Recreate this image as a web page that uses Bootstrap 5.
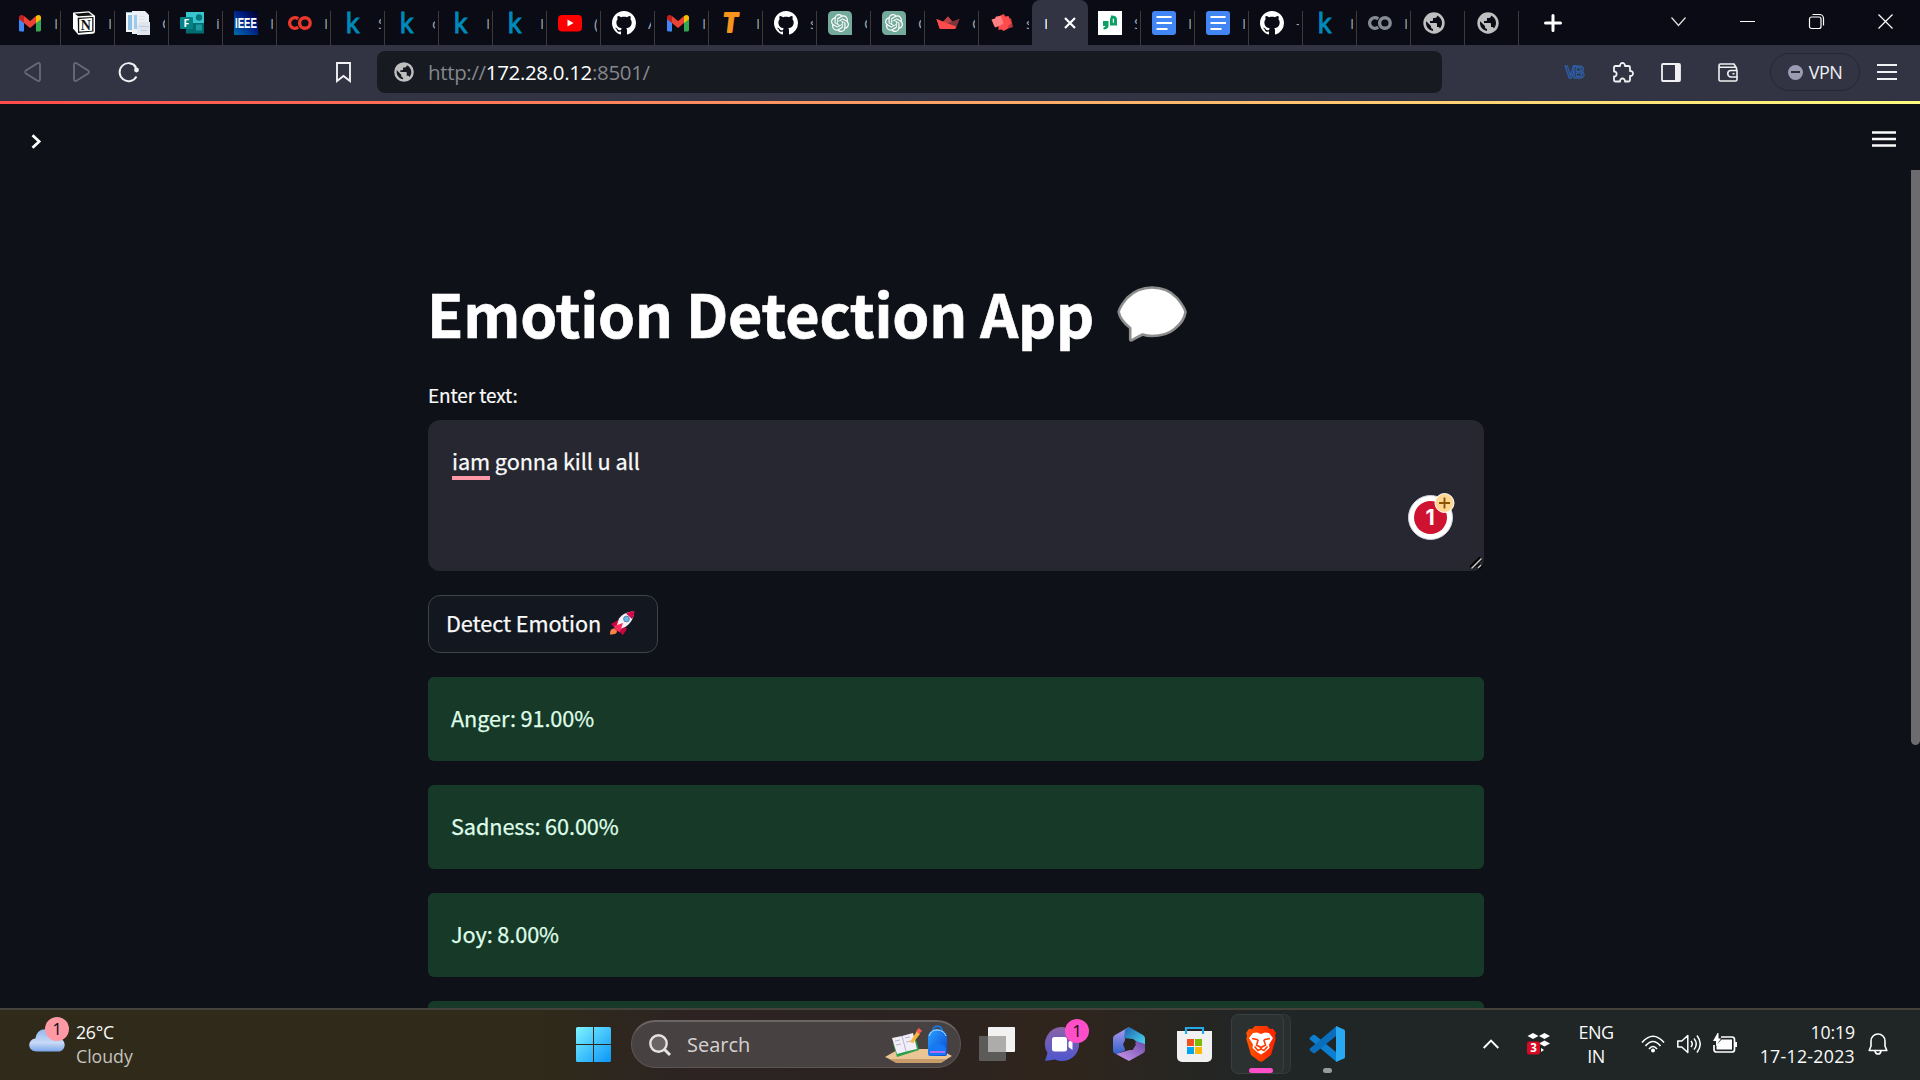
<!DOCTYPE html>
<html lang="en" data-bs-theme="dark">
<head>
<meta charset="utf-8">
<title>Emotion Detection App</title>
<link href="https://cdn.jsdelivr.net/npm/bootstrap@5.3.0/dist/css/bootstrap.min.css" rel="stylesheet">
<style>
  body { width:1920px; height:1080px; overflow:hidden; background:#0e1117; color:#fafafa; font-family:"Noto Sans CJK SC","Noto Sans",sans-serif; }
  svg { display:block; flex:none; overflow:visible; }
  .defs-only { position:absolute; width:0; height:0; }
  .ui-font { font-family:"Open Sans","Noto Sans",sans-serif; }
  /* browser tabs */
  .tab-strip { height:45px; background:#0a0b14; padding-left:7px; }
  .fav-tab { width:54px; height:45px; padding-left:11px; flex:none; position:relative; }
  .fav-tab::after { content:""; position:absolute; right:0; top:11px; bottom:0; width:1px; background:#3b3b3b; }
  .fav-tab svg { width:24px; height:24px; }
  .fav-tab .clip { width:3px; margin-left:12px; overflow:hidden; white-space:nowrap; font-size:15px; line-height:24px; color:#a2a3a8; }
  .fav-tab.no-line::after { display:none; }
  .fav-tab.current { width:56px; margin:0 -1px; background:#323443; border-radius:8px 8px 0 0; padding-left:12px; }
  .fav-tab.current .clip { margin-left:0; color:#fff; }
  .fav-tab.current svg { width:12px; height:12px; margin-left:17px; }
  .fav-tab.current::after { display:none; }
  .k-fav { width:24px; margin-right:0; }
  .win-btns { gap:54px; padding:0 27px 2px 0; }
  /* toolbar */
  .tool-bar { height:56px; background:#323443; padding:0 0 2px 24px; }
  .addr { width:1065px; height:42px; border-radius:8px; background:#171a21; margin-left:26px; padding-left:17px; font-size:20.5px; letter-spacing:-.34px; color:#85878c; }
  .addr b { font-weight:400; color:#fff; }
  .vpn { width:90px; height:38px; border:1px solid #252734; border-radius:19px; font-size:18px; color:#f0f0f3; letter-spacing:-.5px; }
  .vpn-dot { width:15px; height:15px; border-radius:50%; background:#9b9cb3; }
  .vpn-dot i { width:9px; height:2px; background:#2b2d3a; }
  .rainbow { height:3px; background:linear-gradient(90deg,#ff4b4b,#fffd80); }
  /* app */
  .app-view { height:904px; overflow:hidden; position:relative; }
  .app-head { height:66px; padding:0 24px 0 31px; }
  .scroll-thumb { position:absolute; right:0; top:66px; width:9px; height:575px; background:#6b6b70; border-radius:0 0 5px 5px; }
  .app-col { width:1056px; margin-left:428px; padding-top:102px; }
  .app-title { font-size:59.3px; font-weight:700; line-height:80px; height:80px; margin:0; letter-spacing:-.22px; -webkit-text-stroke:.7px #fafafa; }
  .app-title span { margin-left:-1px; }
  .field-label { font-size:19px; line-height:28px; height:28px; margin-top:29px; letter-spacing:-.1px; -webkit-text-stroke:.2px; }
  .text-box { height:151px; margin-top:11px; background:#262730; border-radius:12px; padding:25px 24px; font-size:21.7px; line-height:32px; letter-spacing:-.08px; position:relative; -webkit-text-stroke:.25px; }
  .typo { border-bottom:4px solid #ff99a8; display:inline-block; height:35px; }
  .gram { position:absolute; left:979px; top:73px; -webkit-text-stroke:0; }
  .grip { position:absolute; right:2px; bottom:2px; }
  .btn-detect { height:58px; margin-top:24px; border:1px solid #41434c; border-radius:12px; background:#131720; color:#fafafa; font-size:21.7px; letter-spacing:-.1px; padding:0 22px 2px 17px; width:230px; -webkit-text-stroke:.25px; }
  .result { height:84px; margin:24px 0 0; border:0; border-radius:6px; background:#173928; color:#dffde9; padding:0 23px 2px; font-size:21.7px; letter-spacing:-.1px; -webkit-text-stroke:.25px; }
  /* taskbar */
  .task-bar { height:72px; border-top:2px solid #45423b; padding-bottom:2px; background:linear-gradient(90deg,#302a1a 0,#302a1a 28%,#2c2322 36%,#2b2322 46%,#30251c 55%,#202626 66%,#202626 100%); position:relative; }
  .task-bar > * { flex:none; }
  .w-text { font-size:17.7px; line-height:24px; }
  .pip { position:absolute; width:24px; height:24px; border-radius:50%; color:#111; font-size:17px; line-height:24px; text-align:center; }
  .search-pill { width:330px; height:48px; border-radius:24px; background:#484141; border:1px solid #5c5555; border-top:2px solid #6c6565; padding-left:17px; font-size:20px; color:#d5d2d1; }
  .app-tile { width:53px; height:60px; border-radius:7px; background:#2b3031; border:1px solid #3a3f40; box-shadow:7px 0 0 -1px #292e2f,7px 0 0 0 #33393a; position:relative; }
  .run-mark { position:absolute; bottom:0; left:17px; width:24px; height:5px; border-radius:3px; background:#ff4fc8; }
  .run-dot { position:absolute; bottom:-11px; left:14px; width:9px; height:5px; border-radius:3px; background:#979b9c; }
</style>
<script src="https://cdn.jsdelivr.net/npm/bootstrap@5.3.0/dist/js/bootstrap.bundle.min.js"></script>
</head>
<body>
<svg class="defs-only">
  <defs>
    <linearGradient id="ieeeG" x1="0" y1="1" x2="1" y2="0"><stop offset="0" stop-color="#006db0"/><stop offset=".6" stop-color="#001a80"/><stop offset="1" stop-color="#000020"/></linearGradient>
    <linearGradient id="winG" x1="0" y1="0" x2="1" y2="1"><stop offset="0" stop-color="#7df3ff"/><stop offset="1" stop-color="#0a95f8"/></linearGradient>
    <linearGradient id="cloudG" x1="0" y1="0" x2="0" y2="1"><stop offset="0" stop-color="#8fb8f2"/><stop offset=".6" stop-color="#c9daf6"/><stop offset="1" stop-color="#7ba6ea"/></linearGradient>
    <linearGradient id="chatG" x1="0" y1="0" x2="0" y2="1"><stop offset="0" stop-color="#8a63a8"/><stop offset="1" stop-color="#4f57cf"/></linearGradient>
    <linearGradient id="bagG" x1="0" y1="0" x2="1" y2="1"><stop offset="0" stop-color="#2aa2ff"/><stop offset="1" stop-color="#0a49d8"/></linearGradient>
    <linearGradient id="braveG"><stop offset="0" stop-color="#ff5500"/><stop offset="1" stop-color="#ff2000"/></linearGradient>
    <linearGradient id="m1" x1="0" y1="0" x2="0" y2="1"><stop offset="0" stop-color="#b79af0"/><stop offset="1" stop-color="#2f62c9"/></linearGradient>
    <linearGradient id="m2" x1="0" y1="0" x2="1" y2="1"><stop offset="0" stop-color="#1b5fae"/><stop offset="1" stop-color="#4fe0f5"/></linearGradient>
    <linearGradient id="m3" x1="0" y1="1" x2="1" y2="0"><stop offset="0" stop-color="#cf9af0"/><stop offset="1" stop-color="#6a4ba8"/></linearGradient>
  </defs>
  <symbol id="gmail" viewBox="0 0 24 24"><path fill="#4285f4" d="M1 6v13.400A1.500 1.500 0 0 0 2.500 20.500H6V10z"/><path fill="#34a853" d="M18 10v10.500h3.500a1.500 1.500 0 0 0 1.500-1.500V6z"/><path fill="#ea4335" d="M6 5l6 5 6-5v7l-6 5-6-5z"/><path fill="#c5221f" d="M1 6.500C1 4 3.500 3 6 5v7L1 8.200z"/><path fill="#fbbc04" d="M23 6.500C23 4 20.500 3 18 5v7l5-3.800z"/></symbol>
  <symbol id="docs3" viewBox="0 0 24 24"><path fill="#f4f6f8" d="M0 1h8v20H0z"/><path fill="#8fc0e6" d="M2 4h4v15H2zM0 1h9v1H0z"/><path fill="#eceff3" d="M6 0h13l4 4v19H6z"/><path fill="#9ccbee" d="M8 4h3v14H8z"/><path fill="#dfe3ea" d="M13 5h6v1h-6zM13 8h6v1h-6z"/><path fill="#dfe5ee" d="M14 11h10v13H11V15z"/><path fill="#c3cbd8" d="M13 15h10v1H13zm2 4h6v1h-6z"/></symbol>
  <symbol id="colab" viewBox="0 0 24 24"><g fill="none" stroke="currentColor" stroke-width="3.400"><path d="M10.200 7.800a5.300 5.300 0 1 0 0 8.400"/><circle cx="16.900" cy="12" r="5.300"/></g></symbol>
  <symbol id="yt" viewBox="0 0 24 24"><rect y="4" width="24" height="16.500" rx="4" fill="#f00"/><path fill="#fff" d="M9.500 8.500v7l6-3.500z"/></symbol>
  <symbol id="gh" viewBox="0 0 16 16"><path fill="#fff" d="M8 0C3.580 0 0 3.580 0 8c0 3.540 2.290 6.530 5.470 7.590.4.070.55-.17.55-.38 0-.19-.01-.82-.01-1.490-2.010.37-2.530-.49-2.690-.94-.09-.23-.48-.94-.82-1.130-.28-.15-.68-.52-.01-.53.63-.01 1.080.58 1.230.82.72 1.210 1.870.87 2.330.66.070-.52.28-.87.51-1.070-1.780-.2-3.640-.89-3.640-3.950 0-.87.31-1.590.82-2.150-.08-.2-.36-1.020.08-2.120 0 0 .67-.21 2.200.82.64-.18 1.320-.27 2-.27s1.360.09 2 .27c1.530-1.040 2.200-.82 2.200-.82.44 1.100.16 1.920.08 2.120.51.56.82 1.270.82 2.150 0 3.070-1.870 3.750-3.650 3.950.29.25.54.73.54 1.480 0 1.070-.01 1.930-.01 2.200 0 .21.15.46.55.38A8.010 8.010 0 0016 8c0-4.420-3.580-8-8-8z"/></symbol>
  <symbol id="gpt" viewBox="-4 -4 32 32"><path fill="#74aa9c" d="M2-4h20a6 6 0 0 1 6 6v26H2a6 6 0 0 1-6-6V2a6 6 0 0 1 6-6z"/><path fill="#fff" d="M22.282 9.821a5.985 5.985 0 0 0-.516-4.911 6.046 6.046 0 0 0-6.510-2.900A6.065 6.065 0 0 0 4.981 4.182a5.985 5.985 0 0 0-3.998 2.900 6.046 6.046 0 0 0 .743 7.097 5.980 5.980 0 0 0 .511 4.911 6.051 6.051 0 0 0 6.515 2.900A5.985 5.985 0 0 0 13.260 24a6.056 6.056 0 0 0 5.772-4.206 5.989 5.989 0 0 0 3.998-2.900 6.056 6.056 0 0 0-.748-7.073zm-9.022 12.608a4.476 4.476 0 0 1-2.876-1.041l.142-.080 4.778-2.758a.795.795 0 0 0 .393-.681v-6.737l2.020 1.169a.071.071 0 0 1 .038.052v5.583a4.504 4.504 0 0 1-4.495 4.494zm-9.661-4.125a4.471 4.471 0 0 1-.535-3.014l.142.085 4.783 2.758a.771.771 0 0 0 .781 0l5.843-3.369v2.332a.080.080 0 0 1-.033.062L9.740 19.950a4.499 4.499 0 0 1-6.141-1.646zM2.341 7.896a4.485 4.485 0 0 1 2.366-1.973V11.600a.766.766 0 0 0 .388.677l5.814 3.354-2.020 1.169a.076.076 0 0 1-.071 0l-4.830-2.787A4.504 4.504 0 0 1 2.341 7.872zm16.596 3.856L13.104 8.364 15.119 7.200a.076.076 0 0 1 .071 0l4.830 2.791a4.494 4.494 0 0 1-.677 8.104v-5.677a.79.79 0 0 0-.407-.667zm2.011-3.023l-.142-.085-4.774-2.782a.776.776 0 0 0-.785 0L9.409 9.230V6.897a.066.066 0 0 1 .028-.062l4.830-2.787a4.499 4.499 0 0 1 6.680 4.660zM8.307 12.863l-2.020-1.164a.080.080 0 0 1-.038-.057V6.074a4.499 4.499 0 0 1 7.376-3.454l-.142.081L8.704 5.459a.795.795 0 0 0-.393.681zm1.098-2.365l2.602-1.500 2.607 1.500v2.999l-2.597 1.500-2.607-1.500z"/></symbol>
  <symbol id="crown" viewBox="0 0 24 24"><path fill="#ff4b4b" d="M.5 8l6.500 3L12 5.500 16.500 11 12 18H5c-1 0-1.300-.3-1.600-1z"/><path fill="#bd4043" d="M12 5.500L7 11l5 2 4.500-2z"/><path fill="#7d353b" d="M23.700 7.700L12 12l-8 5.500c.3.400.7.500 1.500.5h13c1 0 1.400-.4 1.700-1z"/><path fill="#ff4b4b" d="M.5 8L12 12.500 20 15.500l-.5 1.500c-.3.700-.8 1-2 1H5.500c-1 0-1.500-.3-2-1.500z"/></symbol>
  <symbol id="boxes" viewBox="0 0 24 24"><path fill="#b8383f" d="M14 9l7-2 2 9-6 2-3-2z"/><path fill="#ff4b4b" d="M8 5.500l6-2.500 1 2.500 3.500-.5 3 7.500-3 2-.5 3-4.500 2.500-2-1.500-3 .5z"/><path fill="#ff8080" d="M1.500 8.500L5 7.500 6 5.500l5-.5 2.500 7.500-3 2-5.500 2-1.500-3z"/></symbol>
  <symbol id="quote" viewBox="0 0 24 24"><path fill="#fff" d="M0 0h24v24H0z"/><path fill="#0ca064" d="M5 10h5.500v5.500c-.5 2-2.500 3-5 3v-2.200c1 0 1.700-.3 2-1.300H5z"/><path fill="#0ca064" d="M19 14.500h-7V9c0-2.500 2-4 .5-4.500 4-.5 6.500 1 6.500 4zM14.800 7.800v4H16v-4z"/></symbol>
  <symbol id="gdoc" viewBox="0 0 24 24"><rect width="24" height="24" rx="3" fill="#4285f4"/><path stroke="#fff" stroke-width="2" d="M4.500 6h15M4.500 12H20M4.500 18h11"/></symbol>
  <symbol id="globe" viewBox="0 0 24 24"><path fill="#bfbfbf" d="M12 1.300a10.700 10.700 0 1 0 0 21.400 10.700 10.700 0 0 0 0-21.400zm-1 18.630c-3.950-.49-7-3.850-7-7.930 0-.62.080-1.210.21-1.790L9 15v1c0 1.100.9 2 2 2v1.930zm6.900-2.540c-.26-.81-1-1.390-1.900-1.390h-1v-3c0-.55-.45-1-1-1H8v-2h2c.55 0 1-.45 1-1V7h2c1.100 0 2-.9 2-2v-.41c2.930 1.190 5 4.060 5 7.410 0 2.080-.8 3.970-2.100 5.390z"/></symbol>
</svg>

<header class="ui-font">
  <div class="tab-strip d-flex align-items-center">
    <div class="fav-tab d-flex align-items-center"><svg><use href="#gmail"/></svg><span class="clip">I</span></div>
    <div class="fav-tab d-flex align-items-center"><svg viewBox="0 0 24 24"><path fill="#fff" d="M1.500 1.600L17 .3l6 4.400V20c0 1.700-.7 2.600-2.600 2.800L6.300 23.800 1 17.500V2z"/><path fill="#111" d="M2.800 2.700L16.500 1.600l4 2.800L6.200 5.300zM5.700 6.800L21.500 6v14.500L6 22z"/><path fill="#fff" d="M7.200 7.900l13-.8v12.600l-13 .9z"/><text x="13.700" y="18.600" font-family="Liberation Serif" font-weight="700" font-size="14" text-anchor="middle" fill="#111">N</text></svg><span class="clip">I</span></div>
    <div class="fav-tab d-flex align-items-center"><svg><use href="#docs3"/></svg><span class="clip">C</span></div>
    <div class="fav-tab d-flex align-items-center"><svg viewBox="0 0 24 24"><path fill="#37c6d0" d="M6 1h18v11H6z"/><path fill="#036c70" d="M6 12h18v10.500H6z"/><circle cx="19" cy="6.500" r="3.200" fill="#05767a"/><path fill="#1a9ba1" d="M16 13.500h6v6h-6z"/><rect y="6" width="13" height="12" rx="1" fill="#038387"/><text x="6.300" y="15.800" font-family="Open Sans" font-weight="700" font-size="10.500" text-anchor="middle" fill="#fff">F</text></svg><span class="clip">i</span></div>
    <div class="fav-tab d-flex align-items-center"><svg viewBox="0 0 24 24"><path fill="url(#ieeeG)" d="M0 0h24v24H0z"/><text x="12" y="16.500" textLength="22" lengthAdjust="spacingAndGlyphs" font-family="Liberation Sans" font-weight="700" font-size="15.500" text-anchor="middle" fill="#fff">IEEE</text></svg><span class="clip">I</span></div>
    <div class="fav-tab d-flex align-items-center" style="color:#e8382c"><svg><use href="#colab"/></svg><span class="clip">I</span></div>
    <div class="fav-tab d-flex align-items-center"><svg viewBox="0 0 24 24"><text x="3.500" y="21.500" font-family="Noto Sans" font-size="26.500" fill="#008abc" stroke="#008abc" stroke-width=".9">k</text></svg><span class="clip">S</span></div>
    <div class="fav-tab d-flex align-items-center"><svg viewBox="0 0 24 24"><text x="3.500" y="21.500" font-family="Noto Sans" font-size="26.500" fill="#008abc" stroke="#008abc" stroke-width=".9">k</text></svg><span class="clip">c</span></div>
    <div class="fav-tab d-flex align-items-center"><svg viewBox="0 0 24 24"><text x="3.500" y="21.500" font-family="Noto Sans" font-size="26.500" fill="#008abc" stroke="#008abc" stroke-width=".9">k</text></svg><span class="clip">I</span></div>
    <div class="fav-tab d-flex align-items-center"><svg viewBox="0 0 24 24"><text x="3.500" y="21.500" font-family="Noto Sans" font-size="26.500" fill="#008abc" stroke="#008abc" stroke-width=".9">k</text></svg><span class="clip">I</span></div>
    <div class="fav-tab d-flex align-items-center"><svg><use href="#yt"/></svg><span class="clip">(</span></div>
    <div class="fav-tab d-flex align-items-center"><svg><use href="#gh"/></svg><span class="clip">A</span></div>
    <div class="fav-tab d-flex align-items-center"><svg><use href="#gmail"/></svg><span class="clip">I</span></div>
    <div class="fav-tab d-flex align-items-center"><svg viewBox="0 0 24 24"><text x="10.500" y="21" font-family="Lato" font-weight="900" font-style="italic" font-size="26" text-anchor="middle" fill="#f7941e" stroke="#f7941e" stroke-width="1.800" stroke-linejoin="round">T</text></svg><span class="clip">I</span></div>
    <div class="fav-tab d-flex align-items-center"><svg><use href="#gh"/></svg><span class="clip">s</span></div>
    <div class="fav-tab d-flex align-items-center"><svg><use href="#gpt"/></svg><span class="clip">C</span></div>
    <div class="fav-tab d-flex align-items-center"><svg><use href="#gpt"/></svg><span class="clip">C</span></div>
    <div class="fav-tab d-flex align-items-center"><svg><use href="#crown"/></svg><span class="clip">C</span></div>
    <div class="fav-tab no-line d-flex align-items-center"><svg><use href="#boxes"/></svg><span class="clip">s</span></div>
    <div class="fav-tab current d-flex align-items-center"><span class="clip">I</span><svg viewBox="0 0 12 12"><path stroke="#fff" stroke-width="2.200" d="M1 1l10 10M11 1L1 11"/></svg></div>
    <div class="fav-tab d-flex align-items-center"><svg><use href="#quote"/></svg><span class="clip">S</span></div>
    <div class="fav-tab d-flex align-items-center"><svg><use href="#gdoc"/></svg><span class="clip">I</span></div>
    <div class="fav-tab d-flex align-items-center"><svg><use href="#gdoc"/></svg><span class="clip">I</span></div>
    <div class="fav-tab d-flex align-items-center"><svg><use href="#gh"/></svg><span class="clip">-</span></div>
    <div class="fav-tab d-flex align-items-center"><svg viewBox="0 0 24 24"><text x="3.500" y="21.500" font-family="Noto Sans" font-size="26.500" fill="#008abc" stroke="#008abc" stroke-width=".9">k</text></svg><span class="clip">I</span></div>
    <div class="fav-tab d-flex align-items-center" style="color:#858b92"><svg><use href="#colab"/></svg><span class="clip">I</span></div>
    <div class="fav-tab d-flex align-items-center"><svg><use href="#globe"/></svg></div>
    <div class="fav-tab d-flex align-items-center"><svg><use href="#globe"/></svg></div>
    <svg class="ms-4" width="19" height="18" viewBox="-1 0 19 18"><path stroke="#fff" stroke-width="3" stroke-linecap="round" d="M9 1.500v15M1.500 9h15"/></svg>
    <div class="win-btns d-flex align-items-center ms-auto">
      <svg width="15" height="15" viewBox="0 0 15 15" fill="none" stroke="#ddd" stroke-width="1.300"><path d="M.5 3.500l7 8 7-8"/></svg>
      <svg width="15" height="15" viewBox="0 0 15 15"><path stroke="#fff" d="M0 7.500h15"/></svg>
      <svg width="15" height="15" viewBox="0 0 15 15" fill="none" stroke="#fff" stroke-width="1.200"><rect x=".5" y="3" width="11.500" height="11.500" rx="2"/><path d="M3.500.5h7a4 4 0 0 1 4 4v7"/></svg>
      <svg width="15" height="15" viewBox="0 0 15 15"><path stroke="#fff" stroke-width="1.200" d="M.5.5l14 14M14.500.5l-14 14"/></svg>
    </div>
  </div>

  <div class="tool-bar d-flex align-items-center">
    <svg width="17" height="20" viewBox="0 0 17 20" fill="none" stroke="#686a77" stroke-width="1.800"><path d="M13.500 1.200L1.900 8.600a1.700 1.700 0 0 0 0 2.800l11.600 7.400c1.200.6 2.500 0 2.500-1.400V2.600c0-1.400-1.300-2-2.500-1.400z"/></svg>
    <svg style="margin-left:32px" width="17" height="20" viewBox="0 0 17 20" fill="none" stroke="#686a77" stroke-width="1.800"><path d="M3.500 1.200l11.600 7.400a1.700 1.700 0 0 1 0 2.800L3.500 18.800c-1.200.6-2.500 0-2.500-1.400V2.600c0-1.400 1.300-2 2.500-1.400z"/></svg>
    <svg style="margin-left:29px" width="20" height="20" viewBox="0 0 20 20" fill="none" stroke="#f1f1f4" stroke-width="1.900"><path d="M17 5a9 9 0 1 0 .5 9.500"/><circle cx="17.500" cy="8" r="2.400" fill="#f1f1f4" stroke="none"/><path d="M15 3.500l3 4"/></svg>
    <svg style="margin-left:197px" width="15" height="20" viewBox="0 0 15 20" fill="none" stroke="#f1f1f4" stroke-width="1.900"><path d="M1 1h13v18l-6.500-5L1 19z"/></svg>
    <div class="addr d-flex align-items-center"><svg width="22" height="22" style="margin-left:-1px"><use href="#globe"/></svg><span style="margin-left:13px">http://<b>172.28.0.12</b>:8501/</span></div>
    <svg style="margin-left:123px" width="21" height="16" viewBox="0 0 21 16"><text x="0" y="14" font-family="Liberation Sans" font-weight="700" font-size="16.500" textLength="20" fill="#2b3d66" stroke="#2f68b5" stroke-width=".9">VB</text></svg>
    <svg style="margin-left:27px" width="21" height="21" viewBox="0 0 21 21" fill="none" stroke="#f1f1f4" stroke-width="1.800" stroke-linejoin="round"><path d="M2.500 4H7c-.3-4 5.300-4 5 0h3.500q1.500 0 1.500 1.500V9c4-.3 4 5.300 0 5v4q0 1.500-1.500 1.500H12c.3-4-5.300-4-5 0H2.500Q1 19.500 1 18v-3.500c3.500.3 3.500-5.300 0-5v-4Q1 4 2.500 4z"/></svg>
    <svg style="margin-left:27px" width="20" height="19" viewBox="0 0 20 19"><rect x="1" y="1" width="18" height="17" rx="1" fill="none" stroke="#f1f1f4" stroke-width="1.800"/><path fill="#f1f1f4" d="M14 1h5v17h-5z"/></svg>
    <svg style="margin-left:37px" width="20" height="19" viewBox="0 0 20 19" fill="none" stroke="#f1f1f4" stroke-width="1.600"><path d="M18.500 7V5L16 1H2.500C1.500 1 1 1.500 1 2.500v14c0 1 .5 1.500 1.500 1.500h15c1 0 1.500-.5 1.500-1.500V14M1 4.300h17.500"/><path d="M19 7.500h-6a3 3 0 0 0 0 6.500h6zM14.500 10.800h2"/></svg>
    <div class="vpn d-flex align-items-center justify-content-center" style="margin-left:32px;gap:6px"><span class="vpn-dot d-flex align-items-center justify-content-center"><i></i></span><span>VPN</span></div>
    <svg style="margin-left:17px" width="20" height="16" viewBox="0 0 20 16"><path stroke="#f1f1f4" stroke-width="1.800" d="M0 1h20M0 8h20M0 15h20"/></svg>
  </div>
  <div class="rainbow"></div>
</header>

<main class="app-view">
  <div class="app-head d-flex align-items-center justify-content-between">
    <svg style="margin-top:9px" width="10" height="15" viewBox="0 0 10 15" fill="none" stroke="#fff" stroke-width="2.700"><path d="M1.500 1.200l6.700 6.300-6.700 6.300"/></svg>
    <svg style="margin-top:4px" width="24" height="16" viewBox="0 0 24 16"><path stroke="#fafafa" stroke-width="2.400" d="M0 1.500h24M0 8h24M0 14.500h24"/></svg>
  </div>
  <div class="app-col">
    <h1 class="app-title d-flex"><span>Emotion Detection App</span>
      <svg style="margin:14px 0 0 23px" width="70" height="56" viewBox="0 0 70 56"><path fill="#fff" stroke="#8d8d8d" stroke-width="2.600" stroke-linejoin="round" d="M35 1.500c12 0 20 5 25 10.500 4 5 7.500 9 8.500 14-1 8-6 13-11 17-6 5-13 7-22.500 7-3.500 0-6.500-.5-9.500-1.500-4 2-7.500 4-11 5.800-1 .3-1.500-.2-1.300-1.300V42C8 38 3 33 1.700 26c.6-5 4.300-9 8.300-14C16 6 24 1.500 35 1.500z"/></svg>
    </h1>
    <div class="field-label">Enter text:</div>
    <div class="text-box"><span class="typo">iam</span> gonna kill u all
      <svg class="gram" width="48" height="48" viewBox="0 0 48 48"><circle cx="23.500" cy="24.500" r="22" fill="#fff" stroke="#cfd1df"/><circle cx="23.500" cy="24.500" r="16.500" fill="#ce1230"/><text x="23" y="32" font-family="Inter" font-weight="700" font-size="21.500" text-anchor="middle" fill="#fff">1</text><circle cx="37.500" cy="10" r="9.500" fill="#ffd792" stroke="#fff"/><path stroke="#8d5406" stroke-width="1.900" d="M32 10h11M37.500 4.500v11"/></svg>
      <svg class="grip" width="12" height="12" viewBox="0 0 12 12"><path stroke="#000" stroke-width="4.500" d="M1 11L11 1M8 11l3-3"/><path stroke="#c9cbc6" stroke-width="1.500" d="M1.500 11.500l10-10M8 11l3-3"/></svg>
    </div>
    <button class="btn btn-detect d-flex align-items-center justify-content-between"><span>Detect Emotion</span>
      <svg width="25" height="24" viewBox="0 0 25 24"><path fill="#ff8247" d="M0 23.500c0-4 1-6 4.500-6L7 20c0 2.500-2 3.500-7 3.500z"/><path fill="#c3073f" d="M1 13l7-4 9 9-4 6-6-5z"/><path fill="#f5f1f5" d="M6 17L9 7.500C13 2.500 18 .5 24 .5c0 6-2.500 11-8 15L8 19z"/><path fill="#d1094a" d="M16 2.500C19 .8 22 .1 24.500 0c.1 2.500-.8 5.500-2.500 8z"/><path fill="#fc2d5e" d="M4 15l9-3-3 9-5-2z"/><circle cx="16.500" cy="8" r="2.900" fill="#6db5ec" stroke="#566f91" stroke-width=".8"/></svg>
    </button>
    <div class="alert result d-flex align-items-center">Anger: 91.00%</div>
    <div class="alert result d-flex align-items-center">Sadness: 60.00%</div>
    <div class="alert result d-flex align-items-center">Joy: 8.00%</div>
    <div class="alert result"></div>
  </div>
  <div class="scroll-thumb"></div>
</main>

<footer class="task-bar ui-font d-flex align-items-center">
  <div class="position-relative" style="margin:-7px 0 0 29px"><svg width="36" height="23" viewBox="0 0 36 23"><path fill="url(#cloudG)" d="M8 22.500c-10 0-10-12-1.500-13C8-2 22-3 25.500 8.500c13-1 13 14 3.500 14z"/></svg><span class="pip" style="left:16px;top:-12px;background:#ff99a4">1</span></div>
  <div class="w-text" style="margin:-1px 0 0 11px;width:61px"><div style="letter-spacing:-.3px">26°C</div><div style="color:#c5c3bf">Cloudy</div></div>
  <svg style="margin-left:439px" width="35" height="35" viewBox="0 0 35 35"><path fill="url(#winG)" d="M1.500 0H17v17H0V1.500A1.500 1.500 0 0 1 1.500 0zM18 0h15.500A1.500 1.500 0 0 1 35 1.500V17H18zM0 18h17v17H1.500A1.500 1.500 0 0 1 0 33.500zM18 18h17v15.500a1.500 1.500 0 0 1-1.500 1.500H18z"/></svg>
  <div class="search-pill d-flex align-items-center" style="margin-left:20px">
    <svg width="22" height="22" viewBox="0 0 22 22" fill="none" stroke="#e4e4e4" stroke-width="2.400"><circle cx="9.500" cy="9.500" r="8.200" fill="#6a6464"/><path d="M15.500 15.500l5.500 5.500" stroke-width="3"/></svg>
    <span style="margin-left:16px">Search</span>
    <svg class="ms-auto" style="margin-right:8px" width="67" height="38" viewBox="0 0 67 38"><path fill="#eac596" d="M0 31l14-8h40l13 7-11 6.500H12z"/><path fill="#c79c6a" d="M4 33h58l-6 4H11z"/><path fill="#2ba04a" d="M8 17l22-7 4 14-22 7z"/><path fill="#f1eef8" d="M7 12l10-2 11-3 4 16-9 2-11 3z"/><path fill="none" stroke="#b9b2d0" d="M17 10l4 15M10 15l5-1M11 19l5-1M20 12l5-1M21 16l5-1"/><path fill="#f7b53c" d="M25 16l7-11 3 3-7 9z"/><path fill="#f45e55" d="M31 5l3-3 3 3-3 3z"/><path fill="none" stroke="#1f72d8" stroke-width="2" d="M48 4c0-5 9-5 9 0"/><path fill="url(#bagG)" d="M43 12c0-12 19-12 19 0v16q0 2-2 2H45q-2 0-2-2z"/><path fill="#1578f5" d="M44 24c0-8 17-8 17 0v5H44z"/><path stroke="#b46cf0" stroke-width="2" d="M45 26h15"/><path stroke="#bde2ff" fill="none" d="M44 10c2-5 5-6 8-6s7 1 9 6"/></svg>
  </div>
  <svg style="margin-left:18px" width="36" height="34" viewBox="0 0 36 34"><rect x="9" width="27" height="25" rx="1" fill="#f2f2f2"/><rect y="9" width="27" height="25" rx="1" fill="#5d5b59"/><path fill="#adacab" d="M9 9h18v16H9z"/></svg>
  <div class="position-relative" style="margin-left:30px"><svg width="34" height="34" viewBox="0 0 34 34"><path fill="url(#chatG)" d="M17 0a17 17 0 1 1-7 32.400L0 34l2.500-8A17 17 0 0 1 17 0z"/><rect x="7" y="10" width="15" height="14.500" rx="2.500" fill="#fff"/><path fill="#fff" d="M23.500 15l4-3v11l-4-3z"/></svg><span class="pip" style="left:20px;top:-8px;background:#ff4fc8">1</span></div>
  <svg style="margin-left:34px" width="32" height="34" viewBox="0 0 32 34"><path fill="url(#m1)" d="M16 0L2 8C.8 8.800 0 10 0 11.500v12C0 26 2 27 4 27l8-3.500V9z"/><path fill="url(#m2)" d="M16 0l14 8c1.200.8 2 2 2 3.500v9L20 12l-9-1 1-8z"/><path fill="url(#m3)" d="M32 17v6c0 1.500-.8 2.500-2 3.200L16 34 3 27l17-5 3-8z"/><path fill="#28241f" d="M12.500 12h7l3.500 5.500-3.500 5.500h-7L10 17.500z"/></svg>
  <svg style="margin-left:32px" width="35" height="35" viewBox="0 0 35 35"><path fill="#f1f1f1" d="M0 4h35v26a5 5 0 0 1-5 5H5a5 5 0 0 1-5-5z"/><path fill="none" stroke="#27a8e8" stroke-width="2.200" d="M9 7V1h17v6"/><path fill="#f25022" d="M10 12h7v7h-7z"/><path fill="#7fba00" d="M18 12h7v7h-7z"/><path fill="#00a4ef" d="M10 20h7v7h-7z"/><path fill="#ffb900" d="M18 20h7v7h-7z"/></svg>
  <div class="app-tile" style="margin-left:19px"><svg style="margin:11px 0 0 14px" width="30" height="36" viewBox="0 0 30 36"><path fill="url(#braveG)" d="M9 0h12l3 3 3-.3L30 7l-1 3 .7 3L25 29l-8 6q-2 1.500-4 0l-8-6L.3 13 1 10 0 7l3-4.300L6 3z"/><path fill="#fff" d="M15 8l4-1.500 4 .5 4 5-4 6.500.5 3.500-4.500 4-4 2.500-4-2.500-4.500-4L7 18.500 3 12l4-5 4-.5z"/><path fill="none" stroke="#ff3a00" stroke-width="1.600" d="M6 12.500l5 1 1 1-1.500 4.500 4.500 2.500 4.500-2.500-1.500-4.500 1-1 5-1M15 21v2.500M8.500 20.500l3.500 4 3-1.500 3 1.500 3.500-4"/></svg><span class="run-mark"></span></div>
  <div class="position-relative" style="margin-left:25px"><svg width="36" height="36" viewBox="0 0 36 36"><path fill="#0d7fd0" d="M1 11.500l3-2.500q1-.5 2 0l21 17v9.500L1 13.500q-1-1 0-2z"/><path fill="#0a6ebd" d="M1 24.500l3 2.500q1 .5 2 0L27 10V.5L1 22.500q-1 1 0 2z"/><path fill="#2aa9f3" d="M27 0l8 3.500q1 .5 1 1.500v26q0 1-1 1.500L27 36z"/></svg><span class="run-dot"></span></div>

  <svg style="margin-left:138px" width="16" height="10" viewBox="0 0 16 10" fill="none" stroke="#fff" stroke-width="1.900"><path d="M.7 9L8 1.500 15.300 9"/></svg>
  <svg style="margin-left:28px" width="23" height="22" viewBox="0 0 23 22"><path fill="#fff" d="M6 0l5.500 3L6 6 .5 3zM17.500 0L23 3l-5.500 3L12 3zM17.500 7.500l5.500 3-5.500 3-5.500-3zM14 15l3 2-3 2z"/><rect y="8.500" width="13" height="13" rx="2" fill="#d40b23"/><text x="6.500" y="19.300" font-family="Open Sans" font-weight="700" font-size="11.500" text-anchor="middle" fill="#fff">3</text></svg>
  <div class="w-text text-center" style="margin-left:28px;width:36px;font-size:18px;letter-spacing:-.6px"><div>ENG</div><div>IN</div></div>
  <svg style="margin-left:27px" width="24" height="18" viewBox="0 0 24 18" fill="none" stroke="#fff" stroke-width="1.700"><path d="M1 7.500q11-12.500 22 0M4.500 11q7.500-9 15 0M8 14q4-5 8 0"/><circle cx="12" cy="15.500" r="2" fill="#fff" stroke="none"/></svg>
  <svg style="margin-left:12px" width="24" height="20" viewBox="0 0 24 20" fill="none" stroke="#fff" stroke-width="1.500"><path stroke-linejoin="round" d="M.8 7h4l6-5.500v17L4.800 13h-4zM14 7q2.500 3 0 6M17 4.500q4.500 5.500 0 11M20 1.500q6.500 8.500 0 17"/></svg>
  <svg style="margin-left:12px;margin-top:-2px" width="24" height="20" viewBox="0 0 24 20"><path fill="none" stroke="#fff" stroke-width="1.700" d="M8 4h11q2.500 0 2.500 2.500v10q0 2.500-2.500 2.500H3.500Q1 19 1 16.500V12"/><path fill="#fff" d="M8.500 6.500H19v10H3.500V12zM22 9h2v5h-2zM4.500 0L0 8h3v5l5-7.500H5.500V0z"/></svg>
  <div class="w-text text-end" style="margin:-1px 0 0 18px;width:100px"><div style="letter-spacing:-.1px">10:19</div><div style="letter-spacing:.3px">17-12-2023</div></div>
  <svg style="margin-left:13px" width="20" height="22" viewBox="0 0 20 22" fill="none" stroke="#fff" stroke-width="1.600"><path stroke-linejoin="round" d="M3 17.500H1.200L3 13V8a7 7 0 0 1 14 0v5l1.800 4.500zM7 18q.5 3 3 3t3-3"/></svg>
</footer>
</body>
</html>
